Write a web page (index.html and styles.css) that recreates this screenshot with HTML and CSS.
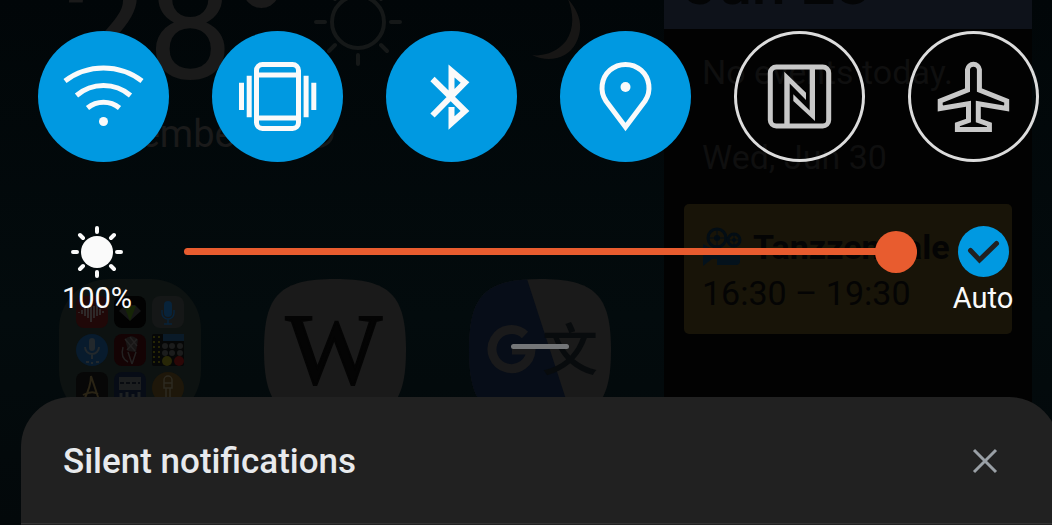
FILE: index.html
```html
<!DOCTYPE html>
<html lang="en">

<head>
    <meta charset="utf-8">
    <title>Quick settings</title>
    <link rel="stylesheet" href="styles.css">
</head>

<body>
    <!-- dimmed home screen behind the shade -->
    <div class="home" aria-hidden="true">
        <div class="home-left">
            <div class="weather">
                <div class="temp">28°</div>
                <svg class="weather-sun" width="90" height="90" viewBox="-45 -45 90 90">
                    <circle r="26" />
                    <path d="M0 33V42M0-33V-42M33 0H42M-33 0H-42M23 23L29 29M-23 23L-29 29M23-23L29-29M-23-23L-29-29" />
                </svg>
                <svg class="weather-moon" width="52" height="84" viewBox="0 0 52 84">
                    <path d="M38 22C50 36 54 50 46 66C38 82 18 86 2 78C14 80 28 74 36 64C44 52 44 38 38 22Z" />
                </svg>
            </div>
            <div class="place">
                <span>Bamember</span>
                <svg width="30" height="30" viewBox="0 0 30 30">
                    <path d="M28 12A13 13 0 0 1 8 25" />
                </svg>
            </div>
            <div class="apps">
                <div class="app folder">
                    <svg width="32" height="32" viewBox="0 0 32 32">
                        <rect width="32" height="32" rx="8" fill="#200808" />
                        <path d="M3 16V17M6 14V18M9 12V20M12 9V22M15 6V26M18 10V22M21 8V20M24 13V19M27 15V17" stroke="#333" stroke-width="1.5" />
                    </svg>
                    <svg width="32" height="32" viewBox="0 0 32 32">
                        <rect width="32" height="32" rx="8" fill="#020202" />
                        <path d="M5 15L11 9H21L27 15L16 25Z" fill="#151616" />
                        <path d="M10 10H22L16 25Z" fill="#162507" />
                    </svg>
                    <svg width="32" height="32" viewBox="0 0 32 32">
                        <rect width="32" height="32" rx="8" fill="#151717" />
                        <rect x="12" y="5" width="8" height="16" rx="4" fill="#08233a" />
                        <path d="M10 14V17A6 6 0 0 0 22 17V14M16 23V28M12 28H20" fill="none" stroke="#08233a" stroke-width="1.5" />
                    </svg>
                    <svg width="32" height="32" viewBox="0 0 32 32">
                        <circle cx="16" cy="16" r="16" fill="#081b2d" />
                        <rect x="13" y="4" width="6" height="13" rx="3" fill="#22282c" />
                        <path d="M9 13A7 7 0 0 0 23 13M16 21V25M10 28H13M15 29H17M20 28H23" fill="none" stroke="#22282c" stroke-width="2" />
                    </svg>
                    <svg width="32" height="32" viewBox="0 0 32 32">
                        <rect width="32" height="32" rx="8" fill="#140304" />
                        <path d="M11 5Q18 -1 24 6L22 18L14 17Z" fill="#171515" />
                        <path d="M11 5L21 17M16 3L23 12M23 5L13 16M9 13Q6 24 14 28M14 18L18 30M22 18L18 30" fill="none" stroke="#232121" stroke-width="1.5" />
                    </svg>
                    <svg width="32" height="32" viewBox="0 0 32 32">
                        <rect width="32" height="32" rx="2" fill="#060707" />
                        <rect x="11" width="21" height="7" fill="#0a1a28" />
                        <path d="M2 2V30M7 2V30" stroke="#252505" stroke-width="2" stroke-dasharray="2 3" />
                        <g fill="#1b1c1c">
                            <circle cx="13" cy="12" r="3" />
                            <circle cx="20" cy="12" r="3" />
                            <circle cx="28" cy="12" r="3" />
                            <circle cx="13" cy="19" r="3" />
                            <circle cx="20" cy="19" r="3" />
                            <circle cx="28" cy="19" r="3" />
                        </g>
                        <circle cx="15" cy="27" r="5" fill="#282707" />
                        <circle cx="27" cy="27" r="5" fill="#2c0707" />
                    </svg>
                    <svg width="32" height="32" viewBox="0 0 32 32">
                        <rect width="32" height="32" rx="8" fill="#070707" />
                        <path d="M8 28Q15 14 15 4L23 28M7 23Q16 18 22 22" fill="none" stroke="#2a2415" stroke-width="2" />
                    </svg>
                    <svg width="32" height="32" viewBox="0 0 32 32">
                        <rect width="32" height="32" rx="8" fill="#070c16" />
                        <rect x="5" y="5" width="22" height="13" fill="#1c1e1f" />
                        <path d="M6 11H26" stroke="#080b10" stroke-width="2" stroke-dasharray="4 2" />
                        <path d="M7 21V32M13 20V32M19 22V32M25 20V32" stroke="#1e2122" stroke-width="3" />
                    </svg>
                    <svg width="32" height="32" viewBox="0 0 32 32">
                        <circle cx="16" cy="16" r="16" fill="#1e170a" />
                        <path d="M12 16V8A4 4 0 0 1 20 8V16ZM12 11H20M14 16V32M18 16V25" fill="none" stroke="#2d2a20" stroke-width="1.5" />
                    </svg>
                </div>
                <svg class="app" width="142" height="142" viewBox="0 0 142 142">
                    <path d="M71 0C126 0 142 16 142 71S126 142 71 142S0 126 0 71S16 0 71 0Z" fill="#1a1a1a" />
                    <text class="app-w" x="70" y="105" text-anchor="middle">W</text>
                </svg>
                <svg class="app" width="142" height="142" viewBox="0 0 142 142">
                    <clipPath id="squircle">
                        <path d="M71 0C126 0 142 16 142 71S126 142 71 142S0 126 0 71S16 0 71 0Z" />
                    </clipPath>
                    <g clip-path="url(#squircle)">
                        <rect width="142" height="142" fill="#1a1a1a" />
                        <path d="M0 0H58L104 142H0Z" fill="#070d18" />
                        <path d="M56 56A19.500 19.500 0 1 0 62 71H43" fill="none" stroke="#1a1a1b" stroke-width="9" />
                        <text class="app-wen" x="101" y="91" text-anchor="middle">文</text>
                    </g>
                </svg>
            </div>
        </div>
        <div class="widget">
            <div class="widget-date">Jun 28</div>
            <div class="widget-line">No events today.</div>
            <div class="widget-line">Wed, Jun 30</div>
            <div class="event">
                <div class="event-title">
                    <svg width="40" height="40" viewBox="0 0 40 40">
                        <g fill="none" stroke="#030d14" stroke-width="3">
                            <circle cx="15" cy="11" r="9" />
                            <circle cx="32" cy="13" r="6" />
                        </g>
                        <circle cx="15" cy="11" r="3" fill="#030d14" />
                        <circle cx="32" cy="13" r="2" fill="#030d14" />
                        <path d="M15 3V19M7 11H23M32 8V18M27 13H37" stroke="#030d14" />
                        <path d="M1 17L10 22H38V34Q38 38 34 38H15V32H10L1 39Z" fill="#04121c" />
                    </svg>
                    <b>Tanzzentrale</b>
                </div>
                <div class="event-time">16:30 – 19:30</div>
            </div>
        </div>
    </div>

    <main class="shade">
        <div class="tiles">
            <button class="tile on" aria-label="Wi-Fi">
                <svg viewBox="0 0 131 131">
                    <path d="M27 50A63.500 63.500 0 0 1 104 50M38.500 64.500A41.500 41.500 0 0 1 92.500 64.500M49.500 77A25.400 25.400 0 0 1 81.500 77" />
                    <circle class="solid" cx="65.500" cy="90.500" r="4.500" />
                </svg>
            </button>
            <button class="tile on" aria-label="Vibrate">
                <svg viewBox="0 0 131 131">
                    <rect x="44.500" y="33.500" width="42" height="64" rx="6" />
                    <path d="M44 44H87M44 87H87M37.200 44.700V86.300M29.500 51.700V79M94.100 44.700V86.300M101.800 51.700V79" />
                </svg>
            </button>
            <button class="tile on" aria-label="Bluetooth">
                <svg viewBox="0 0 131 131">
                    <path d="M46.500 48L79 80L65.500 92V76M46.500 84.500L79 51.500L65.500 40V67" stroke-width="6" />
                </svg>
            </button>
            <button class="tile on" aria-label="Location">
                <svg viewBox="0 0 131 131">
                    <path d="M65.500 96L46 70A23.500 23.500 0 1 1 85 70Z" />
                    <circle class="solid" cx="65.500" cy="56" r="5" />
                </svg>
            </button>
            <button class="tile" aria-label="NFC">
                <svg viewBox="0 0 131 131">
                    <rect x="36.300" y="36" width="58.400" height="59" rx="6" />
                    <path class="solid" d="M50.300 40.700L72 61.700V69L55.700 52.500V94H50.300ZM75.700 37H81V90L59.300 70V63.300L75.700 79.500Z" />
                </svg>
            </button>
            <button class="tile" aria-label="Airplane mode">
                <svg viewBox="0 0 131 131">
                    <path d="M59.500 38.500A6 6 0 0 1 71.400 38.500V59L98.700 70V77.500L70.300 72.800V89.500L81.400 93.500V98.500H49.400V93.500L60.500 89.500V72.800L32.200 77.500V70L59.500 59Z" />
                </svg>
            </button>
        </div>

        <div class="brightness">
            <label class="level" for="bright">
                <svg width="54" height="54" viewBox="-27 -27 54 54">
                    <circle r="16" fill="#fafafa" />
                    <path d="M0 20V24M0-20V-24M20 0H24M-20 0H-24M14 14L17 17M-14 14L-17 17M14-14L17-17M-14-14L-17-17" stroke="#fafafa" stroke-width="4" stroke-linecap="round" />
                </svg>
                <span>100%</span>
            </label>
            <input type="range" id="bright" min="0" max="100" value="100">
            <label class="auto">
                <span class="check">
                    <input type="checkbox" checked>
                    <svg width="51" height="51" viewBox="0 0 51 51">
                        <path d="M12.500 24.500L21.500 34L38.500 17.500" />
                    </svg>
                </span>
                <span>Auto</span>
            </label>
        </div>

        <div class="handle"></div>

        <section class="panel">
            <header class="panel-head">
                <h2>Silent notifications</h2>
                <button class="close" aria-label="Clear silent notifications">
                    <svg width="26" height="26" viewBox="0 0 26 26">
                        <path d="M2 2L24 24M24 2L2 24" />
                    </svg>
                </button>
            </header>
        </section>
    </main>
</body>

</html>
```
FILE: styles.css
```css
* {
    box-sizing: border-box;
}

body {
    margin: 0;
    font-family: Roboto, "Noto Sans", "Noto Sans CJK SC", sans-serif;
    background-color: #020809;
    color: #fafafa;
    overflow: hidden;
}

/* home screen */
.home {
    position: absolute;
    inset: 0;
    display: flex;
    padding-right: 20px;
    overflow: hidden;
    background: linear-gradient(#010608, #030b0d 60%, #03080a);
    color: #1a1a1a;
}

.home-left {
    flex: 1;
    margin-top: -43px;
}

.weather {
    display: flex;
    height: 140px;
    padding-left: 62px;
}

.temp {
    font-size: 152px;
    line-height: 140px;
}

.weather-sun {
    margin: 20px 0 0 23px;
    fill: none;
    stroke: #151818;
    stroke-width: 4px;
    stroke-linecap: round;
}

.weather-moon {
    margin: 20px 0 0 127px;
    fill: #171615;
}

.place {
    display: flex;
    align-items: center;
    gap: 56px;
    padding-left: 62px;
    font-size: 38px;
    line-height: 74px;
}

.place svg {
    fill: none;
    stroke: #151818;
    stroke-width: 3px;
}

.apps {
    display: flex;
    gap: 63px;
    padding: 108px 0 0 59px;
}

.app {
    width: 142px;
    height: 142px;
    flex: none;
}

.folder {
    display: grid;
    grid-template-columns: repeat(3, 32px);
    gap: 6px;
    padding: 17px;
    border-radius: 50px;
    background-color: #0d1211;
}

.app-w {
    font-family: "Liberation Serif", serif;
    font-size: 102px;
    fill: #040404;
    stroke: #040404;
    stroke-width: 2px;
}

.app-wen {
    font-family: "Noto Sans CJK SC", sans-serif;
    font-size: 56px;
    font-weight: 500;
    fill: #080b0d;
}

.widget {
    width: 368px;
    background-color: #020202;
    color: #0f0f0f;
    font-size: 34px;
}

.widget-date {
    height: 74px;
    margin: -45px 0 23px;
    padding-left: 20px;
    font-size: 61px;
    font-weight: 500;
    line-height: 56px;
    background-color: #0e121a;
    color: #040506;
}

.widget-line {
    padding-left: 38px;
    margin-bottom: 45px;
    line-height: 40px;
}

.event {
    margin: -18px 20px 0;
    padding: 20px 18px 18px;
    border-radius: 5px;
    background-color: #181408;
    color: #040404;
    line-height: 46px;
    white-space: nowrap;
}

.event-title {
    display: flex;
    align-items: center;
    gap: 11px;
}

/* quick settings */
.shade {
    position: relative;
    display: flex;
    flex-direction: column;
    min-height: 100vh;
}

.tiles {
    display: flex;
    justify-content: space-between;
    padding: 31px 13px 0 38px;
}

.tile {
    display: grid;
    width: 131px;
    height: 131px;
    padding: 0;
    border: none;
    border-radius: 50%;
    background: none;
    box-shadow: inset 0 0 0 3px #dcdcdc;
    color: #c8c8c8;
}

.tile.on {
    background-color: #0099e1;
    box-shadow: none;
    color: #fafafa;
}

.tile svg {
    width: 131px;
    height: 131px;
    fill: none;
    stroke: currentColor;
    stroke-width: 5;
}

.tile .solid {
    fill: currentColor;
    stroke: none;
}

/* brightness row */
.brightness {
    display: grid;
    grid-template-columns: 68px 1fr 62px;
    padding: 63px 38px 0 63px;
    font-size: 29px;
    line-height: 34px;
}

.level,
.auto {
    display: flex;
    flex-direction: column;
    align-items: center;
    gap: 2px;
}

.brightness input[type="range"] {
    appearance: none;
    height: 42px;
    margin: 5px 35px 0 53px;
    background: none;
}

.brightness input::-webkit-slider-runnable-track {
    height: 7px;
    border-radius: 4px;
    background-color: #e85c2f;
}

.brightness input::-webkit-slider-thumb {
    appearance: none;
    width: 42px;
    height: 42px;
    margin-top: -17px;
    border-radius: 50%;
    background-color: #e85c2f;
}

.check {
    display: grid;
    height: 54px;
    padding-top: 1px;
    align-items: start;
}

.check input,
.check svg {
    grid-area: 1 / 1;
}

.check input {
    appearance: none;
    width: 51px;
    height: 51px;
    margin: 0;
    border-radius: 50%;
    background-color: #444;
}

.check input:checked {
    background-color: #0099e1;
}

.check svg {
    position: relative;
    fill: none;
    stroke: #212121;
    stroke-width: 5px;
    stroke-linecap: round;
    pointer-events: none;
}

.handle {
    width: 58px;
    height: 5px;
    margin: 29px auto 48px;
    border-radius: 3px;
    background-color: #747678;
    /* centred on the sheet, which runs off the right edge */
    translate: 14px;
}

/* notifications */
.panel {
    flex: 1;
    margin: 0 -7px 0 21px;
    border-radius: 50px 50px 0 0;
    background-color: #212121;
}

.panel-head {
    display: flex;
    align-items: center;
    justify-content: space-between;
    height: 127px;
    padding: 2px 61px 0 42px;
    border-bottom: 1px solid #333;
}

.panel-head h2 {
    margin: 0;
    font-size: 35px;
    font-weight: 500;
    color: #e8eaed;
}

.close {
    display: flex;
    padding: 0;
    border: none;
    background: none;
}

.close path {
    stroke: #9aa0a6;
    stroke-width: 3px;
}
```
